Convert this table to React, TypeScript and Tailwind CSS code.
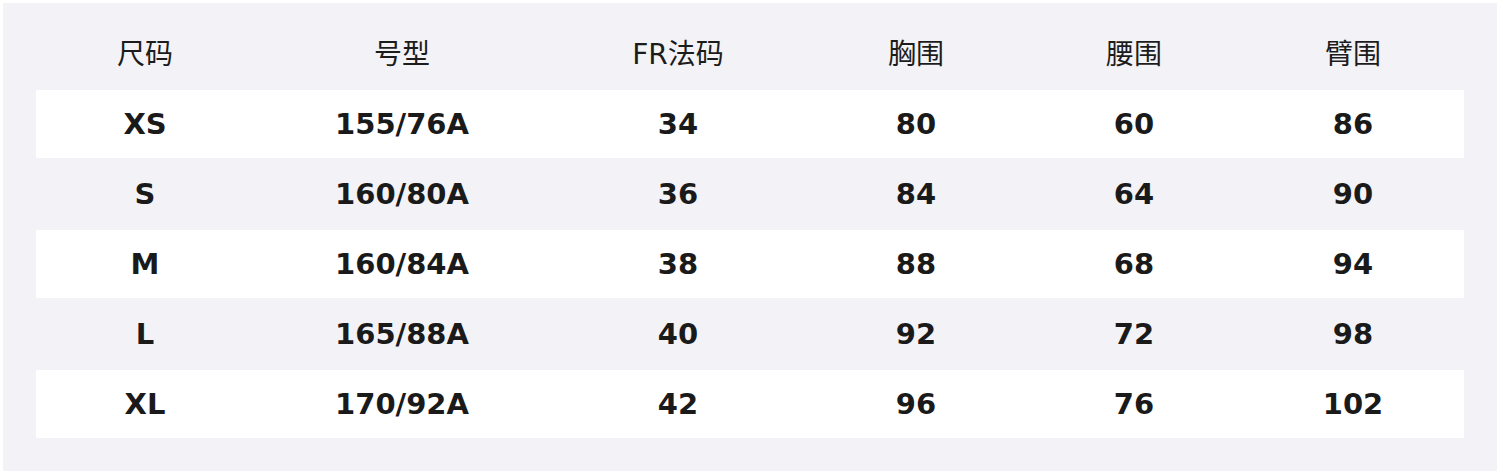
import React from 'react';

const headers = ['尺码', '号型', 'FR法码', '胸围', '腰围', '臂围'];

const rows: string[][] = [
    ['XS', '155/76A', '34', '80', '60', '86'],
    ['S', '160/80A', '36', '84', '64', '90'],
    ['M', '160/84A', '38', '88', '68', '94'],
    ['L', '165/88A', '40', '92', '72', '98'],
    ['XL', '170/92A', '42', '96', '76', '102'],
];

const cols = 'grid grid-cols-[218px_296px_256px_220px_216px_222px]';

const App: React.FC = () => {
    return (
        <div className="w-[1500px] h-[474px] bg-white p-[3px]">
            <div className="h-[468px] bg-[#f3f3f7] px-[33px] pt-[17px]">
                <div className={`${cols} h-[70px] items-center text-[28px] text-[#1c1c1c] font-['DejaVu_Sans','Noto_Sans_CJK_SC',sans-serif]`}>
                    {headers.map(h => (
                        <div key={h} className="text-center leading-none">{h}</div>
                    ))}
                </div>
                {rows.map((r, i) => (
                    <div
                        key={r[0]}
                        className={`${cols} items-center text-[29px] font-bold text-[#1a1a1a] font-['DejaVu_Sans',sans-serif] ${i % 2 === 0 ? 'bg-white h-[68px]' : 'h-[72px]'}`}
                    >
                        {r.map((c, j) => (
                            <div key={j} className="text-center leading-none">{c}</div>
                        ))}
                    </div>
                ))}
            </div>
        </div>
    );
};

export default App;
